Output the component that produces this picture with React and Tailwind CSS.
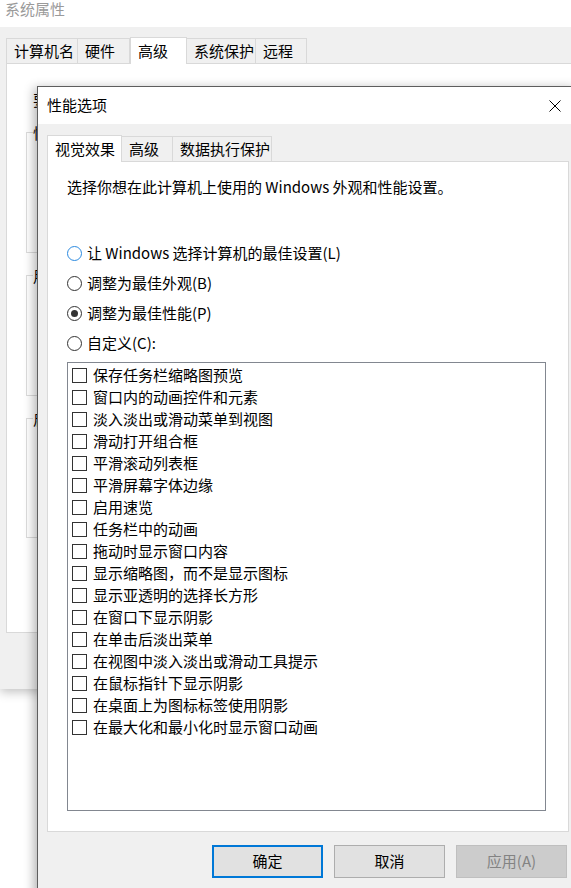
const bgTabs = [
  { label: "计算机名", w: "w-[72px]" },
  { label: "硬件", w: "w-[53px]" },
  { label: "高级", w: "w-[57px]", active: true },
  { label: "系统保护", w: "w-[70px]" },
  { label: "远程", w: "w-[52px]" },
];

const dlgTabs = [
  { label: "视觉效果", w: "w-[75px]", active: true },
  { label: "高级", w: "w-[52px]" },
  { label: "数据执行保护", w: "w-[100px]" },
];

const radios = [
  { label: "让 Windows 选择计算机的最佳设置(L)", focus: true },
  { label: "调整为最佳外观(B)" },
  { label: "调整为最佳性能(P)", checked: true },
  { label: "自定义(C):" },
];

const effects = [
  "保存任务栏缩略图预览",
  "窗口内的动画控件和元素",
  "淡入淡出或滑动菜单到视图",
  "滑动打开组合框",
  "平滑滚动列表框",
  "平滑屏幕字体边缘",
  "启用速览",
  "任务栏中的动画",
  "拖动时显示窗口内容",
  "显示缩略图，而不是显示图标",
  "显示亚透明的选择长方形",
  "在窗口下显示阴影",
  "在单击后淡出菜单",
  "在视图中淡入淡出或滑动工具提示",
  "在鼠标指针下显示阴影",
  "在桌面上为图标标签使用阴影",
  "在最大化和最小化时显示窗口动画",
];

function Tab({ label, w, active }) {
  return (
    <div
      className={
        active
          ? `${w} h-[27px] -mb-px relative z-10 bg-white border border-b-0 border-[#d9d9d9] flex items-center pl-[7px]`
          : `${w} h-[25px] bg-[#f0f0f0] border border-b-0 border-[#d9d9d9] flex items-center pl-[7px] -ml-px first:ml-0`
      }
    >
      {label}
    </div>
  );
}

function Radio({ label, checked, focus }) {
  return (
    <div className="h-[30px] flex items-center gap-[5px]">
      <span
        className={`w-[15px] h-[15px] rounded-full border flex items-center justify-center bg-white ${
          focus ? "border-[#2b8ae0]" : "border-[#333]"
        }`}
      >
        {checked && <span className="w-[7px] h-[7px] rounded-full bg-[#333]" />}
      </span>
      <span>{label}</span>
    </div>
  );
}

export default function App() {
  return (
    <div className="relative w-[571px] h-[888px] overflow-hidden bg-white text-[15px] text-black font-['Noto_Sans_CJK_SC',sans-serif]">
      {/* 系统属性 (inactive, behind) */}
      <div className="absolute left-0 top-0 w-[700px] h-[689px] bg-[#f0f0f0] shadow-[0_3px_10px_rgba(0,0,0,0.25)] flex flex-col">
        <div className="h-[27px] bg-white pl-[5px] leading-[18px] text-[#9a9a9a]">系统属性</div>
        <div className="pl-[6px] mt-[10px] flex items-end">
          {bgTabs.map((t) => (
            <Tab key={t.label} {...t} />
          ))}
        </div>
        <div className="ml-[6px] h-[570px] bg-white border border-[#d9d9d9] pl-[19px] pt-[25px] flex flex-col">
          <div className="pl-[7px] leading-[22px]">要进行大多数更改，你必须作为管理员登录。</div>
          <div className="mt-[21px] h-[121px] border border-[#dcdcdc] pl-[6px]">
            <span className="relative -top-[11px] bg-white">性能</span>
          </div>
          <div className="mt-[22px] h-[121px] border border-[#dcdcdc] pl-[6px]">
            <span className="relative -top-[11px] bg-white">用户配置文件</span>
          </div>
          <div className="mt-[22px] h-[120px] border border-[#dcdcdc] pl-[6px]">
            <span className="relative -top-[11px] bg-white">启动和故障恢复</span>
          </div>
        </div>
      </div>

      {/* 性能选项 dialog */}
      <div className="absolute left-[37px] top-[86px] w-[540px] h-[830px] bg-[#f0f0f0] border border-[#5e5e5e] shadow-[-3px_2px_10px_rgba(0,0,0,0.3)] flex flex-col">
        <div className="h-[37px] bg-white flex items-center justify-between pl-[9px] pr-[16px]">
          <span>性能选项</span>
          <svg width="12" height="12" viewBox="0 0 12 12" className="mr-[-1px]">
            <path d="M0.5 0.5L11.5 11.5M11.5 0.5L0.5 11.5" stroke="#000" strokeWidth="1" />
          </svg>
        </div>

        <div className="pl-[9px] pr-[7px] mt-[11px] flex flex-col">
          <div className="flex items-end">
            {dlgTabs.map((t) => (
              <Tab key={t.label} {...t} />
            ))}
          </div>
          <div className="h-[671px] bg-white border border-[#d9d9d9] pl-[19px] pt-[15px] flex flex-col">
            <div className="leading-[20px]">选择你想在此计算机上使用的 Windows 外观和性能设置。</div>
            <div className="mt-[41px] flex flex-col">
              {radios.map((r) => (
                <Radio key={r.label} {...r} />
              ))}
            </div>
            <div className="mt-[4px] w-[479px] h-[449px] border border-[#828790] pt-[1px] pl-[4px] flex flex-col">
              {effects.map((e) => (
                <div key={e} className="h-[22px] flex items-center gap-[6px]">
                  <span className="w-[15px] h-[15px] border border-[#333] bg-white" />
                  <span>{e}</span>
                </div>
              ))}
            </div>
          </div>

          <div className="mt-[13px] flex justify-end gap-[11px] mr-[2px]">
            <button className="w-[111px] h-[33px] bg-[#e1e1e1] border-2 border-[#0078d7] text-black">确定</button>
            <button className="w-[111px] h-[33px] bg-[#e1e1e1] border border-[#adadad] text-black">取消</button>
            <button className="w-[111px] h-[33px] bg-[#cccccc] border border-[#bfbfbf] text-[#838383]">应用(A)</button>
          </div>
        </div>
      </div>
    </div>
  );
}
